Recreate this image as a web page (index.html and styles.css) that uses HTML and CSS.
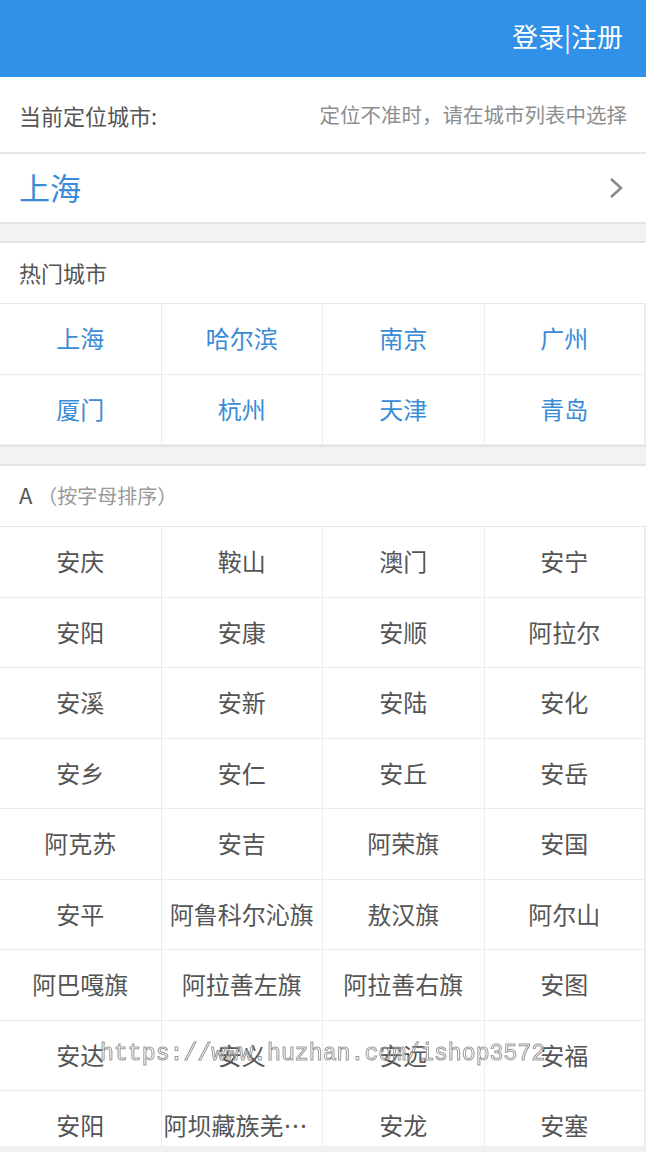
FILE: index.html
```html
<!DOCTYPE html>
<html>
	<head>
		<title>选择城市</title>
		<meta charset="UTF-8">
		<meta name="viewport" content="width=device-width, initial-scale=1" />
		<link rel="stylesheet" href="styles.css">
	</head>
	<body>
		<header class="topbar">
			<a class="login" href="#">登录|注册</a>
		</header>
		<div class="page">
			<!--current location-->
			<div class="locate-tip">
				<span class="locate-label">当前定位城市:</span>
				<span class="locate-hint">定位不准时，请在城市列表中选择</span>
			</div>
			<a class="current-city" href="#">
				<span>上海</span>
				<svg class="chevron" width="16" height="22" viewBox="0 0 16 22">
					<polyline points="3,2 13,11 3,20" fill="none" stroke="#8a8a8a" stroke-width="2.6"/>
				</svg>
			</a>
			<div class="gap"></div>

			<!--hot cities-->
			<div class="section-title"><span>热门城市</span></div>
			<ul class="city-grid hot">
				<li>上海</li><li>哈尔滨</li><li>南京</li><li>广州</li>
				<li>厦门</li><li>杭州</li><li>天津</li><li>青岛</li>
			</ul>
			<div class="gap"></div>

			<!--cities by letter-->
			<div class="section-title"><span>A <small>（按字母排序）</small></span></div>
			<div class="letter-list">
				<ul class="city-grid">
					<li>安庆</li><li>鞍山</li><li>澳门</li><li>安宁</li>
					<li>安阳</li><li>安康</li><li>安顺</li><li>阿拉尔</li>
					<li>安溪</li><li>安新</li><li>安陆</li><li>安化</li>
					<li>安乡</li><li>安仁</li><li>安丘</li><li>安岳</li>
					<li>阿克苏</li><li>安吉</li><li>阿荣旗</li><li>安国</li>
					<li>安平</li><li>阿鲁科尔沁旗</li><li>敖汉旗</li><li>阿尔山</li>
					<li>阿巴嘎旗</li><li>阿拉善左旗</li><li>阿拉善右旗</li><li>安图</li>
					<li>安达</li><li>安义</li><li>安远</li><li>安福</li>
					<li>安阳</li><li>阿坝藏族羌族自治州</li><li>安龙</li><li>安塞</li>
				</ul>
				<div class="watermark">https://www.huzhan.com/ishop3572</div>
			</div>
		</div>
		<footer class="bottom-strip"></footer>
	</body>
</html>
```

FILE: styles.css
```css
/*Page*/
body{
	margin: 0;
	height: 100vh;
	display: flex;
	flex-direction: column;
	overflow: hidden;
	background: #fff;
	font-family: "Noto Sans CJK SC", "Noto Sans", sans-serif;
	color: #555;
}
a{
	text-decoration: none;
	color: inherit;
}
.page{
	flex: 1;
	overflow: hidden;
}
.bottom-strip{
	height: 6px;
	background: #f0f0f0;
}

/*Top bar*/
.topbar{
	height: 77px;
	flex-shrink: 0;
	background: #3190e8;
	display: flex;
	justify-content: flex-end;
	align-items: center;
	padding-right: 23px;
}
.topbar .login{
	color: #fff;
	font-size: 26px;
	line-height: 1;
	margin-top: -5px;
}

/*Current city*/
.locate-tip{
	height: 75px;
	display: flex;
	justify-content: space-between;
	align-items: center;
	padding: 0 19px 0 19px;
	border-bottom: 2px solid #e6e6e6;
	line-height: 1;
}
.locate-label{
	font-size: 22px;
	color: #555;
}
.locate-hint{
	font-size: 20.5px;
	color: #8e8e8e;
}
.current-city{
	height: 68px;
	display: flex;
	justify-content: space-between;
	align-items: center;
	padding: 0 22px 0 19px;
	font-size: 31px;
	line-height: 1;
	color: #3a8cd6;
}
.current-city span{
	margin-top: -4px;
}
.gap{
	height: 17px;
	background: #f2f2f2;
	border-top: 2px solid #e4e4e4;
	border-bottom: 2px solid #e4e4e4;
}

/*Section title*/
.section-title{
	height: 60px;
	display: flex;
	align-items: center;
	padding-left: 19px;
	font-size: 22px;
	line-height: 1;
	color: #555;
	border-bottom: 1px solid #e8e8e8;
}
.section-title span{
	margin-top: -3px;
}
.section-title small{
	font-size: 20px;
	color: #999;
}

/*City grid*/
.city-grid{
	list-style: none;
	margin: 0;
	padding: 0;
	display: grid;
	grid-template-columns: repeat(4, 1fr);
}
/* long names get cut with dots */
.city-grid li{
	box-sizing: border-box;
	height: 70.5px;
	padding: 0 2px;
	border-right: 1px solid #ececec;
	border-bottom: 1px solid #ececec;
	font-size: 24px;
	line-height: 68px;
	text-align: center;
	color: #555;
	white-space: nowrap;
	overflow: hidden;
	text-overflow: ellipsis;
}
.city-grid li:nth-child(4n){
	border-right: 2px solid #ececec;
}
.city-grid.hot li{
	color: #3a8cd6;
}

/*Watermark*/
.letter-list{
	position: relative;
}
.watermark{
	position: absolute;
	left: 100px;
	top: 514px;
	font-family: "Liberation Mono", monospace;
	font-size: 23.2px;
	color: transparent;
	-webkit-text-stroke: 1px #9a9a9a;
	will-change: transform;
	pointer-events: none;
	white-space: nowrap;
}
```
